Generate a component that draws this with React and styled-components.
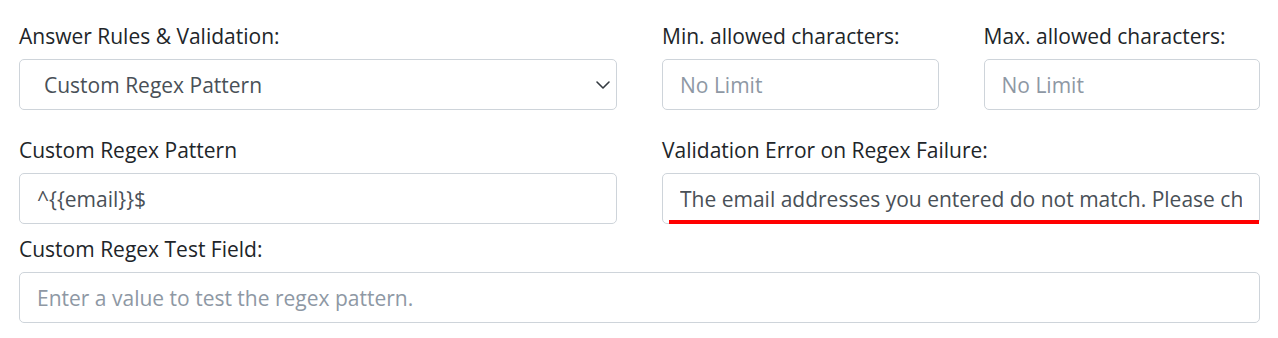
import React from 'react';
import styled, { createGlobalStyle } from 'styled-components';
import { ChevronDown } from 'lucide-react';

const GlobalStyle = createGlobalStyle`
  body {
    margin: 0;
    background: #fff;
    font-family: "Open Sans", "Liberation Sans", sans-serif;
  }
`;

const Wrapper = styled.section`
  padding: 22px 18px 0 19px;
`;

const Row = styled.div`
  display: grid;
  grid-template-columns: ${(p) => p.columns};
  column-gap: 45px;
  margin-bottom: ${(p) => p.spacing || 0}px;
`;

const Field = styled.div`
  position: relative;
  display: flex;
  flex-direction: column;
  min-width: 0;
`;

const Label = styled.label`
  font-size: 21px;
  line-height: 28px;
  color: #212529;
  margin-bottom: 9px;
  white-space: nowrap;
`;

const Input = styled.input`
  box-sizing: border-box;
  width: 100%;
  height: 51px;
  padding: 0 17px;
  font-family: inherit;
  font-size: 21px;
  color: #495057;
  background: #fff;
  border: 1px solid #ced4da;
  border-radius: 5px;
  outline: none;

  &::placeholder {
    color: #8e98a4;
  }
`;

const SelectBox = styled.div`
  position: relative;
  display: flex;
  align-items: center;
`;

const Select = styled.select`
  box-sizing: border-box;
  width: 100%;
  height: 51px;
  padding: 0 36px 0 24px;
  font-family: inherit;
  font-size: 21px;
  color: #495057;
  background: #fff;
  border: 1px solid #ced4da;
  border-radius: 5px;
  outline: none;
  appearance: none;
  -webkit-appearance: none;
`;

const Chevron = styled(ChevronDown)`
  position: absolute;
  right: 2px;
  top: 50%;
  transform: translateY(-50%);
  color: #343a40;
  pointer-events: none;
`;

const Highlight = styled.div`
  position: absolute;
  left: 7px;
  right: 1px;
  bottom: 0;
  height: 4px;
  background: #ff0000;
`;

export default function App() {
  return (
    <>
      <GlobalStyle />
      <Wrapper>
        <Row columns="598px 1fr 1fr" spacing={26}>
          <Field>
            <Label>Answer Rules &amp; Validation:</Label>
            <SelectBox>
              <Select defaultValue="regex">
                <option value="none">None</option>
                <option value="regex">Custom Regex Pattern</option>
              </Select>
              <Chevron size={24} strokeWidth={1.6} />
            </SelectBox>
          </Field>
          <Field>
            <Label>Min. allowed characters:</Label>
            <Input placeholder="No Limit" />
          </Field>
          <Field>
            <Label>Max. allowed characters:</Label>
            <Input placeholder="No Limit" />
          </Field>
        </Row>
        <Row columns="1fr 1fr" spacing={11}>
          <Field>
            <Label>Custom Regex Pattern</Label>
            <Input defaultValue="^{{email}}$" />
          </Field>
          <Field>
            <Label>Validation Error on Regex Failure:</Label>
            <Input defaultValue="The email addresses you entered do not match. Please check and try again." />
            <Highlight />
          </Field>
        </Row>
        <Row columns="1fr">
          <Field>
            <Label>Custom Regex Test Field:</Label>
            <Input placeholder="Enter a value to test the regex pattern." />
          </Field>
        </Row>
      </Wrapper>
    </>
  );
}
